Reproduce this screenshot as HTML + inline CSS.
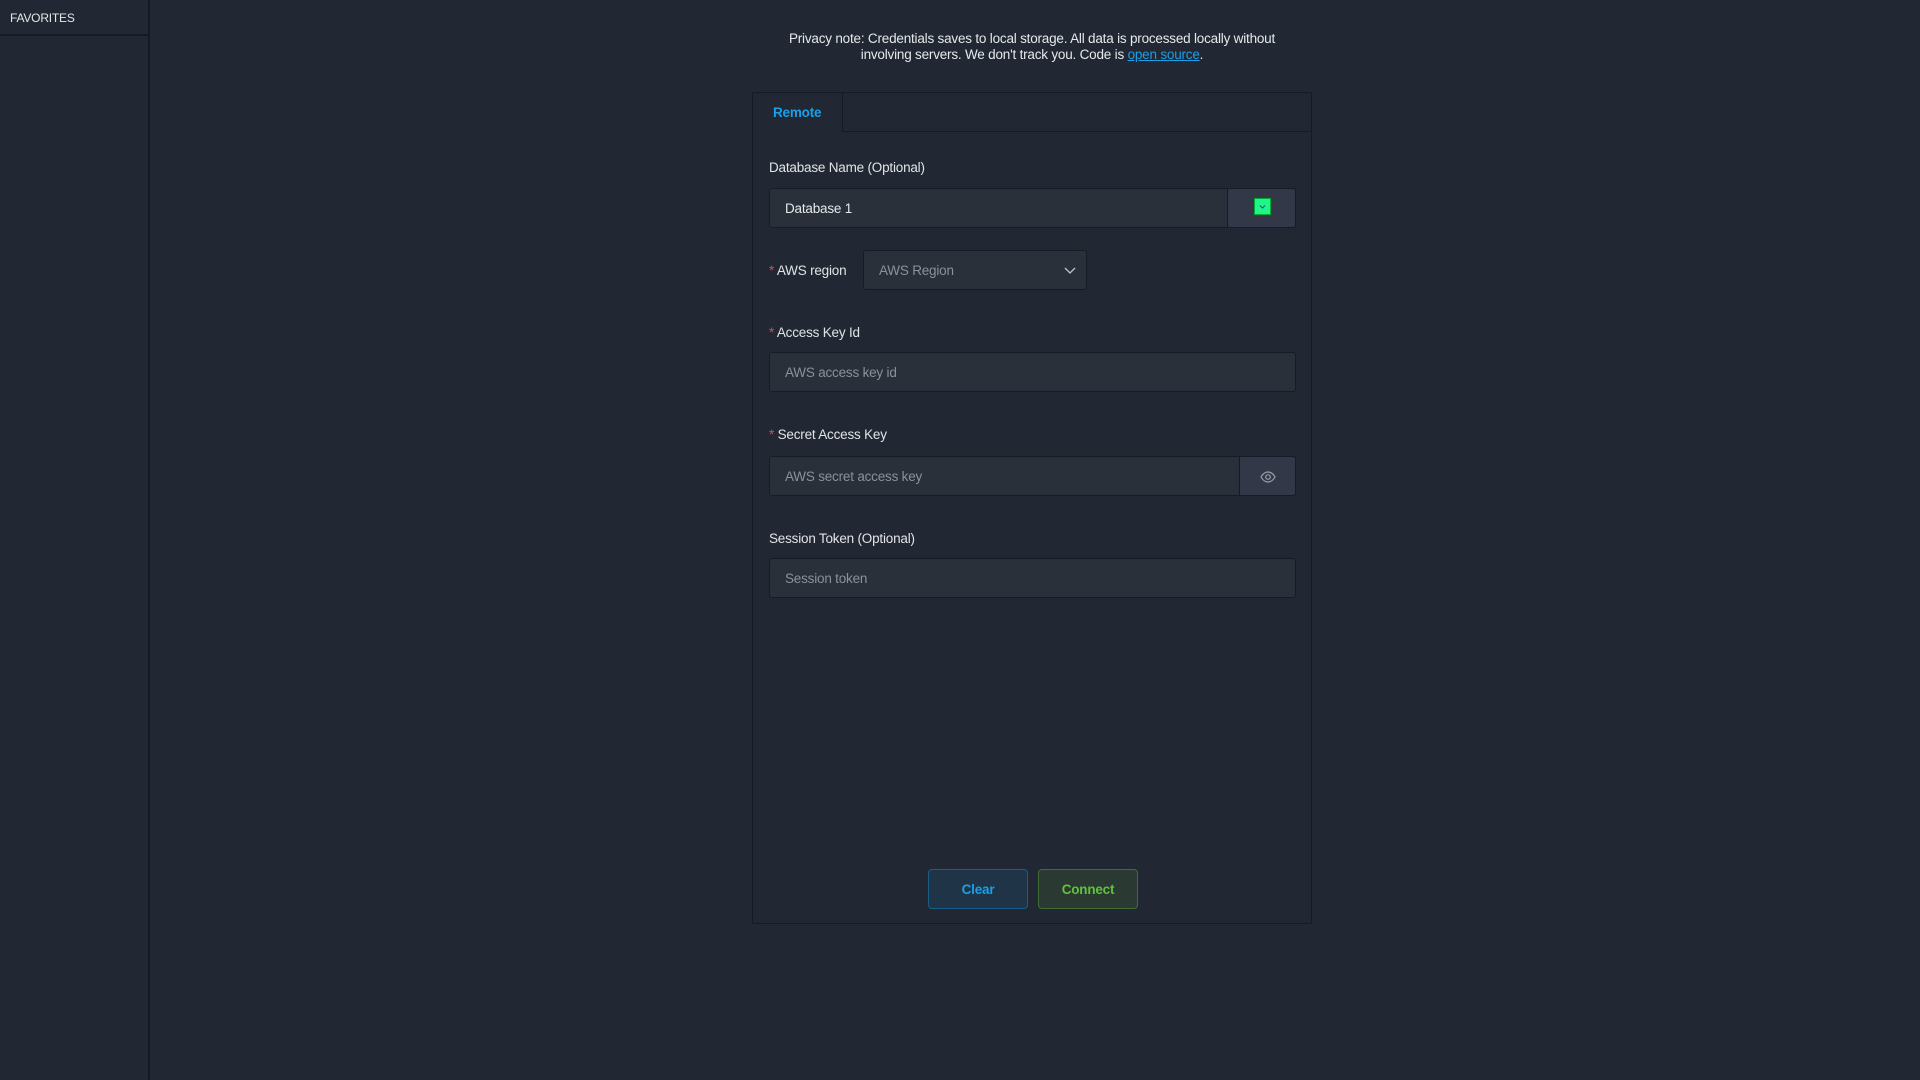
<!DOCTYPE html>
<html><head><style>
*{box-sizing:border-box;margin:0;padding:0}
body{width:1920px;height:1080px;background:#222833;font-family:"Liberation Sans",sans-serif;color:#d9dce0;font-size:13.5px;position:relative;overflow:hidden;letter-spacing:-0.2px}
.side{position:absolute;left:0;top:0;width:150px;height:1080px;border-right:2px solid #161b23}
.side .h{height:36px;border-bottom:2px solid #161b23;padding:11px 0 0 10px;font-size:12px;color:#e6e6e6}
.note{position:absolute;left:770px;width:524px;top:31px;text-align:center;line-height:16px;color:#e6e8eb}
.note a{color:#1a9fe8;text-decoration:underline}
.card{position:absolute;left:752px;top:92px;width:560px;height:832px;border:1px solid #161b23}
.tabbar{height:39px;border-bottom:1px solid #161b23;position:relative}
.tab{position:absolute;left:0;top:0;width:90px;height:39px;border-right:1px solid #161b23;background:#222833;color:#1a9fe8;font-weight:bold;padding:12px 0 0 20px;font-size:13.5px}
.abs{position:absolute}
.lbl{color:#e1e3e6}
.req{color:#e0474f}
.inp{position:absolute;background:#2a303a;border:1px solid #171c24;border-radius:3px;color:#8b9099;padding:0 15px;display:flex;align-items:center}
.add{position:absolute;background:#323848;border:1px solid #171c24;border-radius:0 3px 3px 0}
.btn{position:absolute;top:869px;width:100px;height:40px;border-radius:4px;display:flex;align-items:center;justify-content:center;font-weight:bold}
</style></head><body>
<div class="side"><div class="h">FAVORITES</div></div>
<div class="note">Privacy note: Credentials saves to local storage. All data is processed locally without involving servers. We don't track you. Code is <a>open source</a>.</div>
<div class="card"><div class="tabbar"><div class="tab">Remote</div></div></div>
<div class="abs lbl" style="left:769px;top:160px">Database Name (Optional)</div>
<div class="inp" style="left:769px;top:188px;width:527px;height:40px;color:#e6e8eb">Database 1</div>
<div class="add" style="left:1227px;top:188px;width:69px;height:40px"><div style="position:absolute;left:26px;top:9px;width:17px;height:17px;background:#1ef58a;border:1px solid #0a3;"><svg width="15" height="15" style="position:absolute;left:0;top:0"><path d="M5 6.5l2.5 2.5 2.5-2.5" stroke="#256" fill="none" stroke-width="1"/></svg></div></div>
<div class="abs lbl" style="left:769px;top:263px"><span class="req">*</span> AWS region</div>
<div class="inp" style="left:863px;top:250px;width:224px;height:40px">AWS Region<svg width="12" height="8" style="position:absolute;right:10px;top:16px"><path d="M1 1l5 5 5-5" stroke="#c0c4ca" fill="none" stroke-width="1.3"/></svg></div>
<div class="abs lbl" style="left:769px;top:325px"><span class="req">*</span> Access Key Id</div>
<div class="inp" style="left:769px;top:352px;width:527px;height:40px">AWS access key id</div>
<div class="abs lbl" style="left:769px;top:427px"><span class="req">*</span> Secret Access Key</div>
<div class="inp" style="left:769px;top:456px;width:527px;height:40px">AWS secret access key</div>
<div class="add" style="left:1239px;top:456px;width:57px;height:40px"><svg width="16" height="12" style="position:absolute;left:20px;top:14px"><path d="M1 6C3 2.5 5.5 1 8 1s5 1.5 7 5c-2 3.5-4.5 5-7 5S3 9.5 1 6z" stroke="#9aa0a8" fill="none" stroke-width="1.2"/><circle cx="8" cy="6" r="2.3" stroke="#9aa0a8" fill="none" stroke-width="1.2"/></svg></div>
<div class="abs lbl" style="left:769px;top:531px">Session Token (Optional)</div>
<div class="inp" style="left:769px;top:558px;width:527px;height:40px">Session token</div>
<div class="btn" style="left:928px;background:#1f3447;border:1px solid #1a5e88;color:#1a9fe8">Clear</div>
<div class="btn" style="left:1038px;background:#2a3a33;border:1px solid #3f6e35;color:#5fc23a">Connect</div>
</body></html>
